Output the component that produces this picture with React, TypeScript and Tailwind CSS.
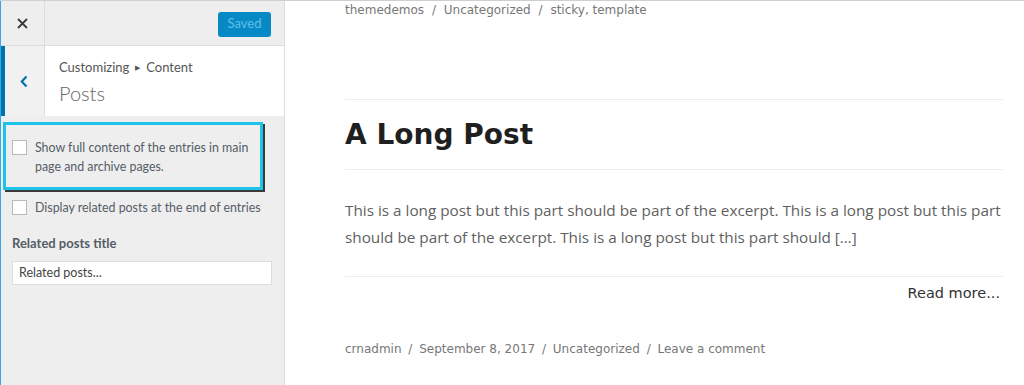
export default function App() {
  const side = { fontFamily: 'Lato, "Noto Sans", sans-serif' };
  const geo = { fontFamily: '"DejaVu Sans", "Liberation Sans", sans-serif' };
  const body = { fontFamily: '"Open Sans", "Noto Sans", sans-serif' };

  return (
    <div className="flex h-[385px] w-[1024px] overflow-hidden border-t border-[#cfcfcf] bg-white">
      {/* customizer sidebar */}
      <aside
        className="flex w-[285px] shrink-0 flex-col border-l border-r border-l-[#3ba6e6] border-r-[#dddddd] bg-[#eeeeee] text-[#555d66]"
        style={side}
      >
        <div className="flex h-[45px] items-center border-b border-[#dddddd]">
          <div className="flex h-full w-[44px] items-center justify-center border-r border-[#dddddd]">
            <svg width="11" height="11" viewBox="0 0 11 11">
              <path d="M1 1L10 10M10 1L1 10" stroke="#3c3c3c" strokeWidth="1.8" />
            </svg>
          </div>
          <div className="ml-auto mr-[13px] mt-[2px] flex h-[25px] w-[53px] items-center justify-center rounded-[3px] bg-[#0689c4] text-[13px] text-[#5fc0e8]">
            Saved
          </div>
        </div>

        <div className="flex h-[70px]">
          <div className="flex w-[44px] items-center justify-center border-l-[4px] border-r border-l-[#0073aa] border-r-[#dddddd] bg-[#f1f1f1] pr-[1px]">
            <svg width="8" height="13" viewBox="0 0 8 13">
              <path d="M6.5 1.5L1.8 6.5L6.5 11.5" fill="none" stroke="#0073aa" strokeWidth="2.2" />
            </svg>
          </div>
          <div className="flex flex-1 flex-col justify-center bg-white pl-[14px]">
            <div className="flex items-center gap-[6px] text-[13px] leading-[18px] text-[#555]">
              <span>Customizing</span>
              <span className="text-[7px]">▶</span>
              <span>Content</span>
            </div>
            <div className="mt-[5px] text-[20px] font-light leading-[24px] text-[#666]">Posts</div>
          </div>
        </div>

        <div className="ml-[2px] mt-[6px] w-[260px] border-[3px] border-[#1ec3ea] pb-[11px] pl-[6px] pt-[13px] shadow-[2px_2px_0_#3a3a3a]">
          <div className="flex items-start gap-[8px]">
            <div className="mt-[2px] h-[15px] w-[15px] shrink-0 border border-[#b4b9be] bg-white" />
            <div className="text-[12.4px] leading-[19px]">
              Show full content of the entries in main page and archive pages.
            </div>
          </div>
        </div>

        <div className="ml-[11px] mt-[8px] flex items-start gap-[8px]">
          <div className="mt-[2px] h-[15px] w-[15px] shrink-0 border border-[#b4b9be] bg-white" />
          <div className="text-[12.4px] leading-[19px]">Display related posts at the end of entries</div>
        </div>

        <div className="ml-[11px] mt-[17px] text-[13px] font-bold leading-[19px]">Related posts title</div>
        <div className="ml-[11px] mt-[8px] flex h-[24px] w-[260px] items-center border border-[#dddddd] bg-white pl-[6px] text-[12.5px] text-[#444]">
          Related posts...
        </div>
      </aside>

      {/* preview */}
      <main className="flex flex-1 flex-col pl-[60px] pr-[21px]">
        <div className="text-[12px] leading-[18px] text-[#777]" style={geo}>
          themedemos <span className="mx-[4px]">/</span> Uncategorized <span className="mx-[4px]">/</span> sticky, template
        </div>
        <div className="mt-[80px] border-t border-[#ececec]" />
        <h1 className="pb-[16px] pt-[17px] text-[28px] font-bold leading-[36px] text-[#1f1f1f]" style={geo}>
          A Long Post
        </h1>
        <div className="border-t border-[#ececec]" />
        <p className="mt-[27px] text-[15.3px] leading-[27px] text-[#5f5f5f]" style={body}>
          This is a long post but this part should be part of the excerpt. This is a long post but this part should be
          part of the excerpt. This is a long post but this part should […]
        </p>
        <div className="mt-[25px] border-t border-[#ececec]" />
        <div className="mt-[6px] pr-[3px] text-right text-[14.5px] leading-[20px] text-[#333]" style={geo}>
          Read more...
        </div>
        <div className="mt-[36px] text-[12px] leading-[20px] text-[#777]" style={geo}>
          crnadmin <span className="mx-[3px]">/</span> September 8, 2017 <span className="mx-[3px]">/</span> Uncategorized{" "}
          <span className="mx-[3px]">/</span> Leave a comment
        </div>
      </main>
    </div>
  );
}
